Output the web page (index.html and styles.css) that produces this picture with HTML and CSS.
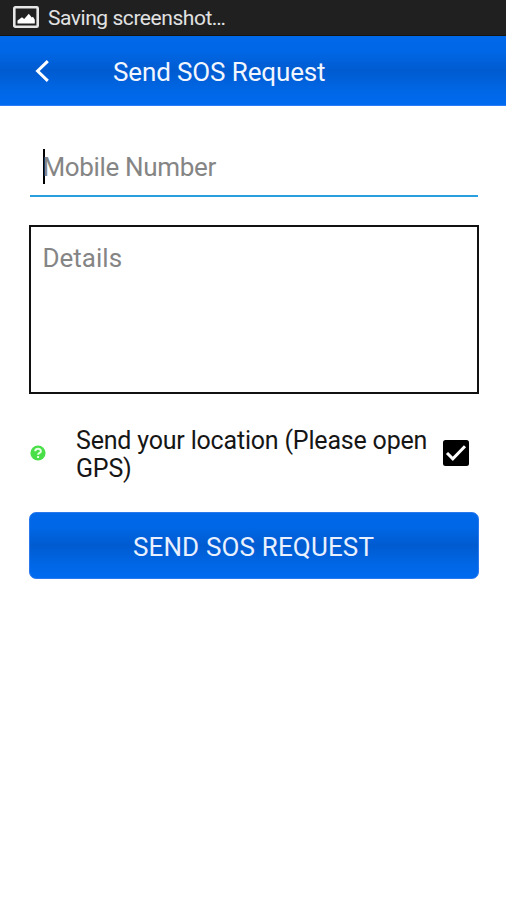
FILE: index.html
```html
<!DOCTYPE html>
<html lang="en">
<head>
<meta charset="utf-8">
<title>Send SOS Request</title>
<link rel="stylesheet" href="styles.css">
</head>
<body>
<div class="status">
  <svg class="status-icon" width="26" height="22" viewBox="0 0 26 22"><rect x="1.3" y="1.3" width="23.4" height="19.4" rx="1" fill="none" stroke="#e6e6e6" stroke-width="2.6"/><path d="M4.5 17.5v-3l4.5-3.2 2.2 1.7 4.6-5.3 3 3.8 1.2-.8 1.8 3v3.8z" fill="#fff"/></svg>
  <span class="status-text">Saving screenshot…</span>
</div>
<header class="bar">
  <svg class="back" width="14" height="22" viewBox="0 0 14 22"><path d="M12.8 1.2 2.6 11l10.2 9.8" fill="none" stroke="#fff" stroke-width="3"/></svg>
  <h1 class="title">Send SOS Request</h1>
</header>
<main class="form">
  <div class="mobile"><span class="caret"></span><span class="hint mobile-hint">Mobile Number</span></div>
  <div class="details"><span class="hint details-hint">Details</span></div>
  <div class="location">
    <svg class="help" width="16" height="16" viewBox="0 0 16 16"><circle cx="8" cy="8" r="7.6" fill="#48df48"/><path d="M5.2 6.3C5.2 3 10.9 3 10.9 6.2 10.9 8 8.1 7.9 8.1 9.7M8.1 10.9v2" fill="none" stroke="#e4ffe0" stroke-width="2"/></svg>
    <p class="location-text"><span class="line1">Send your location (Please open</span> <span class="line2">GPS)</span></p>
    <svg class="check" width="26" height="26" viewBox="0 0 26 26"><rect width="26" height="26" rx="2.5" fill="#000"/><path d="M4 13l5.8 5.8L22 6.2" fill="none" stroke="#fff" stroke-width="3"/></svg>
  </div>
  <div class="send" role="button"><span class="send-text">SEND SOS REQUEST</span></div>
</main>
</body>
</html>
```
FILE: styles.css
```css
body {
  margin: 0;
  background: #fff;
  font-family: Roboto, sans-serif;
  min-height: 900px;
}
.status {
  height: 36px;
  box-sizing: border-box;
  border-bottom: 1px solid #171510;
  background: #202020;
  display: flex;
  align-items: center;
  padding-left: 13px;
}
.status-icon { margin-top: -1px; }
.status-text {
  margin-left: 9px;
  font-size: 21px;
  letter-spacing: -0.45px;
  line-height: 36px;
  color: #e2e2e2;
  white-space: nowrap;
}
.bar {
  height: 70px;
  box-sizing: border-box;
  border-bottom: 1px solid #2a7cf5;
  background: linear-gradient(#0069ea 0%, #0067e6 22%, #005bd0 50%, #0067e6 80%, #006bf0 100%);
  display: flex;
  align-items: center;
  padding-left: 35px;
}
.title {
  margin: 2px 0 0 64px;
  font-size: 26px;
  font-weight: 400;
  letter-spacing: -0.13px;
  line-height: 32px;
  color: #f2f6ff;
  white-space: nowrap;
}
.form { padding: 43px 27.5px 0 28.5px; }
.mobile {
  height: 48px;
  box-sizing: border-box;
  margin: 0 1px;
  border-bottom: 2px solid #2a9fe0;
  display: flex;
  align-items: flex-start;
  padding-left: 13px;
}
.caret {
  width: 2px;
  height: 35px;
  margin-right: -2px;
  background: #000;
}
.hint {
  font-size: 26px;
  line-height: 36px;
  color: #858585;
  white-space: nowrap;
}
.mobile-hint { letter-spacing: -0.35px; }
.details {
  height: 169px;
  box-sizing: border-box;
  margin-top: 28px;
  border: 2px solid #111;
  padding: 13px 12px;
}
.location {
  height: 60px;
  margin-top: 29px;
  display: flex;
  align-items: center;
}
.help { margin-left: 1.5px; }
.location-text {
  width: 367px;
  margin: 3px 0 0 30px;
  font-size: 25px;
  letter-spacing: -0.19px;
  line-height: 28px;
  color: #161616;
}
.line1 { display: block; white-space: nowrap; }
.send {
  height: 67px;
  box-sizing: border-box;
  margin-top: 29px;
  border: 1px solid #2a78ee;
  border-radius: 7px;
  background: linear-gradient(#0069ea 0%, #0067e6 22%, #005bd0 50%, #0067e6 80%, #006bf0 100%);
  display: flex;
  align-items: center;
  justify-content: center;
}
.send-text {
  font-size: 26px;
  letter-spacing: 0.15px;
  line-height: 32px;
  margin-top: 2px;
  color: #e9f0ff;
  white-space: nowrap;
}
```
